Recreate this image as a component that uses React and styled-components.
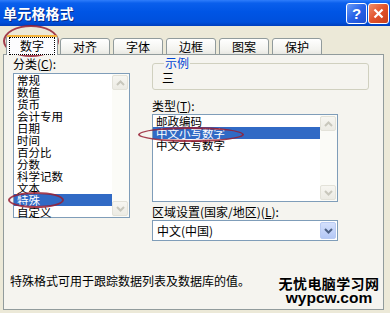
import styled, { createGlobalStyle } from "styled-components"

const Global = createGlobalStyle`
  html, body { margin: 0; padding: 0; background: #ece9d8; }
`

const Window = styled.div`
  position: relative;
  width: 390px;
  height: 313px;
  overflow: hidden;
  background: #ece9d8;
  font-family: "Noto Sans CJK SC", "Liberation Sans", sans-serif;
  font-size: 12px;
  color: #000;
`

const TitleBar = styled.div`
  height: 26px;
  display: flex;
  align-items: center;
  justify-content: space-between;
  padding: 0 1px 0 3px;
  background: linear-gradient(#2f7dfb 0%, #0a5fec 12%, #0055e5 45%, #0050dc 85%, #003fbd 100%);
`

const Title = styled.div`
  color: #fff;
  font-size: 14px;
  font-weight: bold;
  line-height: 16px;
  letter-spacing: 0.2px;
  text-shadow: 1px 1px 0 #0a2d8a;
`

const Controls = styled.div`
  display: flex;
  gap: 1px;
`

const CtrlButton = styled.div`
  width: 21px;
  height: 21px;
  box-sizing: border-box;
  border: 1px solid #fff;
  border-radius: 3px;
  display: flex;
  align-items: center;
  justify-content: center;
  color: #fff;
  font-family: "Liberation Sans", sans-serif;
  font-weight: bold;
  font-size: 15px;
  background: ${p => p.$close
    ? "linear-gradient(135deg, #f08e6c 0%, #e1522b 50%, #c9401c 100%)"
    : "linear-gradient(135deg, #6a9cf8 0%, #2762e8 50%, #1f4fd0 100%)"};
`

const Body = styled.div`
  padding: 9px 0 0 3px;
`

const TabStrip = styled.div`
  position: relative;
  z-index: 1;
  display: flex;
  align-items: flex-end;
  gap: 3px;
  height: 20px;
  margin-bottom: -1px;
  padding-left: 4px;
`

const Tab = styled.div`
  box-sizing: border-box;
  width: ${p => (p.$active ? 52 : 50)}px;
  height: ${p => (p.$active ? 20 : 17)}px;
  margin: ${p => (p.$active ? "0 -1px 0 -1px" : "0")};
  display: flex;
  align-items: center;
  justify-content: center;
  border: 1px solid #919b9c;
  border-bottom: ${p => (p.$active ? "none" : "1px solid #919b9c")};
  border-top: ${p => (p.$active ? "2px solid #f5b43c" : "1px solid #919b9c")};
  border-radius: 3px 3px 0 0;
  background: ${p => (p.$active ? "#fcfcfe" : "linear-gradient(#ffffff, #f3f3ef 70%, #e8e8e2)")};
  line-height: 14px;
`

const FocusText = styled.span`
  outline: 1px dotted #000;
  outline-offset: 1px;
  padding: 0 9px;
`

const Panel = styled.div`
  box-sizing: border-box;
  width: 381px;
  height: 256px;
  border: 1px solid #919b9c;
  background: #f5f4ef;
  padding: 2px 0 0 9px;
`

const Columns = styled.div`
  display: flex;
  gap: 22px;
`

const Column = styled.div`
  display: flex;
  flex-direction: column;
  width: ${p => p.$w}px;
`

const Label = styled.div`
  height: ${p => p.$h || 15}px;
  line-height: 13px;
  margin-top: ${p => p.$mt || 0}px;
`

const ListBox = styled.div`
  box-sizing: border-box;
  display: flex;
  width: ${p => p.$w}px;
  height: ${p => p.$h}px;
  border: 1px solid #7f9db9;
  background: #fff;
`

const Items = styled.div`
  flex: 1;
`

const Item = styled.div`
  height: 12px;
  line-height: 12px;
  font-size: 11.5px;
  padding-left: 3px;
  white-space: nowrap;
  background: ${p => (p.$sel ? "#316ac5" : "transparent")};
  color: ${p => (p.$sel ? "#fff" : "#000")};
`

const ScrollBar = styled.div`
  width: 17px;
  box-sizing: border-box;
  padding: 1px 1px 1px 0;
  display: flex;
  flex-direction: column;
  justify-content: space-between;
  background: #fbfbf7;
`

const ScrollBtn = styled.div`
  height: 15px;
  box-sizing: border-box;
  border: 1px solid #e3e2d9;
  border-radius: 2px;
  background: linear-gradient(#f7f6f1, #ecebe4);
  display: flex;
  align-items: center;
  justify-content: center;
`

const Group = styled.fieldset`
  box-sizing: border-box;
  margin: 0;
  width: 217px;
  height: 33px;
  padding: 0 0 0 9px;
  border: 1px solid #d0d0bf;
  border-radius: 3px;
`

const Legend = styled.legend`
  margin-left: 2px;
  padding: 0 1px;
  color: #0046d5;
  line-height: 12px;
`

const Sample = styled.div`
  line-height: 12px;
  margin-top: 3px;
`

const Combo = styled.div`
  box-sizing: border-box;
  display: flex;
  align-items: center;
  justify-content: space-between;
  width: 186px;
  height: 21px;
  border: 1px solid #7f9db9;
  background: #fff;
  padding: 0 1px 0 4px;
`

const DropBtn = styled.div`
  width: 16px;
  height: 17px;
  box-sizing: border-box;
  border: 1px solid #b9cbf3;
  border-radius: 2px;
  background: linear-gradient(#d4e0fc, #b4c8f6);
  display: flex;
  align-items: center;
  justify-content: center;
`

const Footer = styled.div`
  margin: 33px 0 0 -3px;
  line-height: 14px;
`

const Watermark = styled.div`
  position: absolute;
  left: 277px;
  top: 276px;
  width: 104px;
  text-align: center;
  font-weight: bold;
  color: #000;
  text-shadow: 0 0 2px #fff;
`

const WmCn = styled.div`
  font-size: 14px;
  line-height: 15px;
  letter-spacing: 0.4px;
`

const WmEn = styled.div`
  font-family: "Liberation Sans", sans-serif;
  font-size: 15.5px;
  line-height: 13px;
`

const Ring = styled.div`
  position: absolute;
  left: ${p => p.$x}px;
  top: ${p => p.$y}px;
  width: ${p => p.$w}px;
  height: ${p => p.$h}px;
  box-sizing: border-box;
  border: 2px solid rgba(150, 30, 50, 0.85);
  border-radius: 50%;
  pointer-events: none;
`

const Chevron = ({ up, color = "#c8c7bc" }) => (
  <svg width="9" height="6" viewBox="0 0 9 6">
    <polyline
      points={up ? "1,5 4.5,1.5 8,5" : "1,1 4.5,4.5 8,1"}
      fill="none"
      stroke={color}
      strokeWidth="2"
    />
  </svg>
)

const List = ({ items, selected, w, h }) => (
  <ListBox $w={w} $h={h}>
    <Items>
      {items.map(t => (
        <Item key={t} $sel={t === selected}>{t}</Item>
      ))}
    </Items>
    <ScrollBar>
      <ScrollBtn><Chevron up /></ScrollBtn>
      <ScrollBtn><Chevron /></ScrollBtn>
    </ScrollBar>
  </ListBox>
)

const categories = ["常规", "数值", "货币", "会计专用", "日期", "时间", "百分比", "分数", "科学记数", "文本", "特殊", "自定义"]
const types = ["邮政编码", "中文小写数字", "中文大写数字"]
const tabs = ["数字", "对齐", "字体", "边框", "图案", "保护"]

export default function App() {
  return (
    <Window>
      <Global />
      <TitleBar>
        <Title>单元格格式</Title>
        <Controls>
          <CtrlButton>?</CtrlButton>
          <CtrlButton $close>
            <svg width="11" height="11" viewBox="0 0 11 11">
              <path d="M1.5 1.5 L9.5 9.5 M9.5 1.5 L1.5 9.5" stroke="#fff" strokeWidth="2.2" />
            </svg>
          </CtrlButton>
        </Controls>
      </TitleBar>
      <Body>
        <TabStrip>
          {tabs.map((t, i) => (
            <Tab key={t} $active={i === 0}>
              {i === 0 ? <FocusText>{t}</FocusText> : t}
            </Tab>
          ))}
        </TabStrip>
        <Panel>
          <Columns>
            <Column $w={117}>
              <Label $h={16}>分类(<u>C</u>):</Label>
              <List items={categories} selected="特殊" w={117} h={145} />
            </Column>
            <Column $w={217}>
              <Group>
                <Legend>示例</Legend>
                <Sample>三</Sample>
              </Group>
              <Label $mt={9}>类型(<u>T</u>):</Label>
              <List items={types} selected="中文小写数字" w={186} h={88} />
              <Label $mt={3}>区域设置(国家/地区)(<u>L</u>):</Label>
              <Combo>
                <span>中文(中国)</span>
                <DropBtn><Chevron color="#4d6185" /></DropBtn>
              </Combo>
            </Column>
          </Columns>
          <Footer>特殊格式可用于跟踪数据列表及数据库的值。</Footer>
        </Panel>
      </Body>
      <Watermark>
        <WmCn>无忧电脑学习网</WmCn>
        <WmEn>wypcw.com</WmEn>
      </Watermark>
      <Ring $x={3} $y={25} $w={56} $h={32} />
      <Ring $x={8} $y={192} $w={56} $h={16} />
      <Ring $x={138} $y={127} $w={106} $h={15} />
    </Window>
  )
}
